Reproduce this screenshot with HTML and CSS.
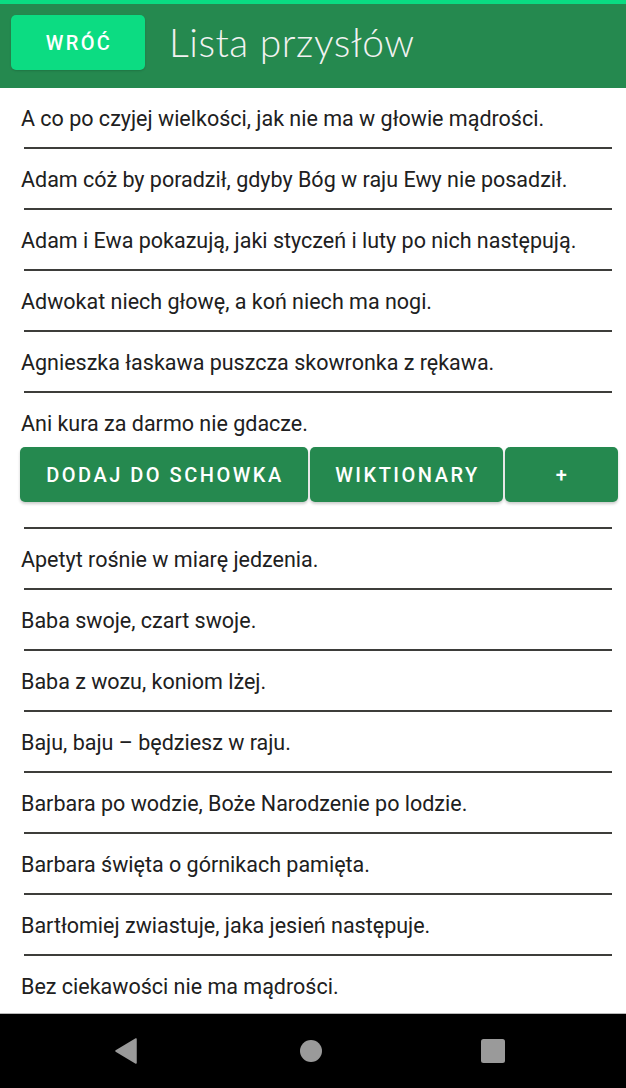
FILE: index.html
```html
<!DOCTYPE html>
<html lang="pl">
<head>
<meta charset="utf-8">
<title>Lista przysłów</title>
<link rel="stylesheet" href="styles.css">
</head>
<body>
<div class="screen">
  <header class="appbar">
    <button class="back-btn">WRÓĆ</button>
    <h1 class="title">Lista przysłów</h1>
  </header>
  <main class="list">
    <div class="item"><p class="text">A co po czyjej wielkości, jak nie ma w głowie mądrości.</p><hr class="divider"></div>
    <div class="item"><p class="text">Adam cóż by poradził, gdyby Bóg w raju Ewy nie posadził.</p><hr class="divider"></div>
    <div class="item"><p class="text">Adam i Ewa pokazują, jaki styczeń i luty po nich następują.</p><hr class="divider"></div>
    <div class="item"><p class="text">Adwokat niech głowę, a koń niech ma nogi.</p><hr class="divider"></div>
    <div class="item"><p class="text">Agnieszka łaskawa puszcza skowronka z rękawa.</p><hr class="divider"></div>
    <div class="item expanded">
      <p class="text">Ani kura za darmo nie gdacze.</p>
      <div class="actions">
        <button class="action">DODAJ DO SCHOWKA</button>
        <button class="action">WIKTIONARY</button>
        <button class="action">+</button>
      </div>
      <hr class="divider">
    </div>
    <div class="item"><p class="text">Apetyt rośnie w miarę jedzenia.</p><hr class="divider"></div>
    <div class="item"><p class="text">Baba swoje, czart swoje.</p><hr class="divider"></div>
    <div class="item"><p class="text">Baba z wozu, koniom lżej.</p><hr class="divider"></div>
    <div class="item"><p class="text">Baju, baju – będziesz w raju.</p><hr class="divider"></div>
    <div class="item"><p class="text">Barbara po wodzie, Boże Narodzenie po lodzie.</p><hr class="divider"></div>
    <div class="item"><p class="text">Barbara święta o górnikach pamięta.</p><hr class="divider"></div>
    <div class="item"><p class="text">Bartłomiej zwiastuje, jaka jesień następuje.</p><hr class="divider"></div>
    <div class="item"><p class="text">Bez ciekawości nie ma mądrości.</p><hr class="divider"></div>
  </main>
  <nav class="navbar">
    <svg class="nav-icon" width="22" height="26" viewBox="0 0 22 26"><path d="M21 1 L21 25 L1 13 Z" fill="#9a9a9a" stroke="#9a9a9a" stroke-width="1.5" stroke-linejoin="round"/></svg>
    <svg class="nav-icon" width="24" height="24" viewBox="0 0 24 24"><circle cx="12" cy="12" r="11" fill="#9a9a9a"/></svg>
    <svg class="nav-icon" width="24" height="24" viewBox="0 0 24 24"><rect x="0" y="0" width="24" height="24" rx="2.5" fill="#9a9a9a"/></svg>
  </nav>
</div>
</body>
</html>
```

FILE: styles.css
```css
* { box-sizing: border-box; }
html, body { margin: 0; padding: 0; }
body {
  background: #ffffff;
  font-family: Roboto, "Liberation Sans", sans-serif;
}
.screen {
  width: 626px;
  height: 1088px;
  display: flex;
  flex-direction: column;
  overflow: hidden;
}
.appbar {
  flex: 0 0 88px;
  background: #25894f;
  border-top: 4px solid #0adc82;
  display: flex;
  align-items: flex-start;
  padding: 11px 0 0 11px;
  gap: 24px;
}
.back-btn {
  width: 134px;
  height: 55px;
  background: #0cdc82;
  border: none;
  border-radius: 5px;
  color: #ffffff;
  font-family: Roboto, sans-serif;
  font-weight: 500;
  font-size: 20px;
  letter-spacing: 2.4px;
  padding: 0 0 0 2px;
  box-shadow: 0 1px 2px rgba(0,0,0,0.15);
}
.title {
  margin: 0;
  padding-top: 5px;
  color: #f2f2f2;
  font-family: Lato, "Open Sans", sans-serif;
  font-weight: 300;
  font-size: 39px;
  line-height: 44px;
  letter-spacing: 0.5px;
}
.list {
  flex: 1 1 auto;
  overflow: hidden;
  display: flex;
  flex-direction: column;
}
.item {
  display: flex;
  flex-direction: column;
  padding-top: 17px;
}
.text {
  margin: 0 0 0 21px;
  font-size: 21.5px;
  line-height: 28px;
  color: #202020;
}
.divider {
  margin: 14px 14px 0 24px;
  border: none;
  height: 2px;
  background: #3d3d3a;
}
.actions {
  margin: 9px 8px 0 20px;
  display: grid;
  grid-template-columns: 288px 193px 113px;
  gap: 2px;
}
.action {
  height: 55px;
  background: #25894f;
  border: none;
  border-radius: 5px;
  color: #ffffff;
  font-family: Roboto, sans-serif;
  font-weight: 500;
  font-size: 20px;
  letter-spacing: 2.5px;
  padding: 0 0 0 2px;
  box-shadow: 0 2px 3px rgba(0,0,0,0.2);
}
.expanded .divider {
  margin-top: 25px;
}
.navbar {
  flex: 0 0 75px;
  background: #000000;
  border-top: 1px solid #b8b8b8;
  display: flex;
  align-items: center;
}
.nav-icon:nth-child(1) { margin-left: 115px; }
.nav-icon:nth-child(2) { margin-left: 162px; }
.nav-icon:nth-child(3) { margin-left: 158px; }
```
